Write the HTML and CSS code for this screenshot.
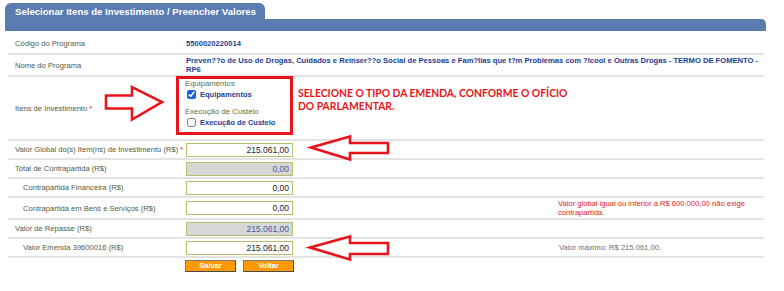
FILE: index.html
```html
<!DOCTYPE html>
<html lang="pt-BR">
<head>
<meta charset="utf-8">
<title>Selecionar Itens de Investimento</title>
<link rel="stylesheet" href="styles.css">
</head>
<body>
<div class="page">
  <div class="tabs"><div class="tab">Selecionar Itens de Investimento / Preencher Valores</div></div>
  <div class="bar"></div>
  <div class="form">
    <div class="row r-code">
      <div class="label">Código do Programa</div>
      <div class="value wide strong">5500020220014</div>
    </div>
    <div class="row r-name">
      <div class="label">Nome do Programa</div>
      <div class="value wide strong">Preven??o de Uso de Drogas, Cuidados e Reinser??o Social de Pessoas e Fam?lias que t?m Problemas com ?lcool e Outras Drogas - TERMO DE FOMENTO - RP6</div>
    </div>
    <div class="row r-items">
      <div class="label">Itens de Investimento <span class="req">*</span></div>
      <div class="value wide items">
        <div class="choice-box">
          <div class="group-title">Equipamentos</div>
          <label class="check"><input type="checkbox" checked> <span>Equipamentos</span></label>
          <div class="group-title second">Execução de Custeio</div>
          <label class="check"><input type="checkbox"> <span>Execução de Custeio</span></label>
        </div>
        <div class="callout">SELECIONE O TIPO DA EMENDA, CONFORME O OFÍCIO<br>DO PARLAMENTAR.</div>
      </div>
    </div>
    <div class="row r-field">
      <div class="label">Valor Global do(s) Item(ns) de Investimento (R$) <span class="req">*</span></div>
      <div class="value"><input class="money" type="text" value="215.061,00"></div>
      <div class="note"></div>
    </div>
    <div class="row r-field">
      <div class="label">Total de Contrapartida (R$)</div>
      <div class="value"><input class="money ro" type="text" value="0,00" readonly></div>
      <div class="note"></div>
    </div>
    <div class="row r-field">
      <div class="label sub">Contrapartida Financeira (R$)</div>
      <div class="value"><input class="money" type="text" value="0,00"></div>
      <div class="note"></div>
    </div>
    <div class="row r-field r-tall">
      <div class="label sub">Contrapartida em Bens e Serviços (R$)</div>
      <div class="value"><input class="money" type="text" value="0,00"></div>
      <div class="note warn">Valor global igual ou inferior a R$ 600.000,00 não exige contrapartida.</div>
    </div>
    <div class="row r-field">
      <div class="label">Valor de Repasse (R$)</div>
      <div class="value"><input class="money ro" type="text" value="215.061,00" readonly></div>
      <div class="note"></div>
    </div>
    <div class="row r-field">
      <div class="label sub">Valor Emenda 39600016 (R$)</div>
      <div class="value"><input class="money" type="text" value="215.061,00"></div>
      <div class="note info">Valor máximo: R$ 215.061,00.</div>
    </div>
    <div class="actions">
      <div></div>
      <div class="buttons">
        <button class="btn" type="button">Salvar</button>
        <button class="btn" type="button">Voltar</button>
      </div>
    </div>
  </div>
  <svg class="arrows" width="784" height="291" viewBox="0 0 784 291" aria-hidden="true">
    <path d="M106 95.5 L132 95.5 L132 87 L162 102 L132 119.5 L132 108.5 L106 108.5 Z"/>
    <path d="M311 147.5 L350 136.5 L350 143 L388 143 L388 153 L350 153 L350 159.5 Z"/>
    <path d="M310 247.5 L350 236.5 L350 243 L388 243 L388 254 L350 254 L350 259.5 Z"/>
  </svg>
</div>
</body>
</html>
```

FILE: styles.css
```css
html, body {
  margin: 0;
  padding: 0;
  background: #ffffff;
}

body {
  font-family: "Liberation Sans", Arial, sans-serif;
  font-size: 7.6px;
  color: #4d5a44;
}

.page {
  position: relative;
  width: 761px;
  height: 291px;
  padding: 3px 0 0 5px;
  box-sizing: content-box;
}

.tabs {
  display: flex;
}

.tab {
  background: #5b7cb1;
  color: #ffffff;
  font-weight: bold;
  font-size: 9.6px;
  height: 16px;
  line-height: 17px;
  padding: 0 9px 0 10px;
  border-radius: 6px 6px 0 0;
}

.bar {
  height: 12px;
  background: #5b7cb1;
  border-radius: 0 5px 0 0;
}

.form {
  margin: 3px 2px 0 3px;
}

.row {
  display: grid;
  grid-template-columns: 175px 372px 1fr;
  align-items: center;
  border-bottom: 2px solid #e3e3e3;
  line-height: 9px;
}

.r-code { height: 19px; }
.r-name { height: 20px; }
.r-items { height: 62px; }
.r-field { height: 17px; }
.r-tall { height: 20px; }

.label {
  padding-left: 7px;
  color: #4f5c45;
  white-space: nowrap;
}

.label.sub {
  padding-left: 15px;
}

.req {
  color: #e83333;
}

.value {
  padding-left: 3px;
}

.value.wide {
  grid-column: 2 / 4;
}

.strong {
  color: #1d3e92;
  font-weight: bold;
}

.items {
  display: flex;
  align-items: flex-start;
  align-self: stretch;
}

.choice-box {
  margin: -1px 0 0 -10px;
  width: 105px;
  height: 53px;
  border: 3px solid #e8141b;
  padding: 0 0 0 6px;
  box-sizing: content-box;
}

.group-title {
  color: #58704a;
  font-size: 7.8px;
  line-height: 8px;
  margin-top: 1px;
}

.group-title.second {
  margin-top: 7px;
}

.check {
  display: flex;
  align-items: center;
  height: 13px;
  color: #1d3e92;
  font-weight: bold;
  font-size: 7.5px;
}

.check input {
  width: 9px;
  height: 9px;
  margin: 0 4px 0 2px;
  accent-color: #1a64d6;
}

.callout {
  margin: 10px 0 0 5px;
  font-family: Lato, "Open Sans", sans-serif;
  font-weight: bold;
  font-size: 10.35px;
  line-height: 13px;
  color: #e8141b;
  white-space: nowrap;
}

.money {
  display: block;
  width: 107px;
  height: 14px;
  box-sizing: border-box;
  margin: 0;
  padding: 0 3px 0 2px;
  border: 1px solid #bcbc70;
  background: #ffffff;
  font-family: "Liberation Sans", Arial, sans-serif;
  font-size: 8.5px;
  color: #222222;
  text-align: right;
  outline: none;
}

.money.ro {
  background: #d7d7d7;
  color: #43599c;
}

.note {
  padding-left: 3px;
}

.note.warn {
  color: #e8202a;
}

.note.info {
  color: #6e6e6e;
  padding-left: 4px;
}

.actions {
  display: grid;
  grid-template-columns: 177px 1fr;
  padding-top: 2px;
}

.buttons {
  display: flex;
  gap: 7px;
}

.btn {
  width: 51px;
  height: 12px;
  padding: 0;
  margin: 0;
  background: #ff9900;
  border: 1px solid;
  border-color: #7a7a7a #4a4a4a #4a4a4a #7a7a7a;
  color: #ffffff;
  font-family: "Liberation Sans", Arial, sans-serif;
  font-weight: bold;
  font-size: 7.5px;
  line-height: 10px;
}

.arrows {
  position: absolute;
  left: 0;
  top: 0;
  pointer-events: none;
}

.arrows path {
  fill: #ffffff;
  stroke: #e8141b;
  stroke-width: 2.6;
  stroke-linejoin: miter;
}
```
